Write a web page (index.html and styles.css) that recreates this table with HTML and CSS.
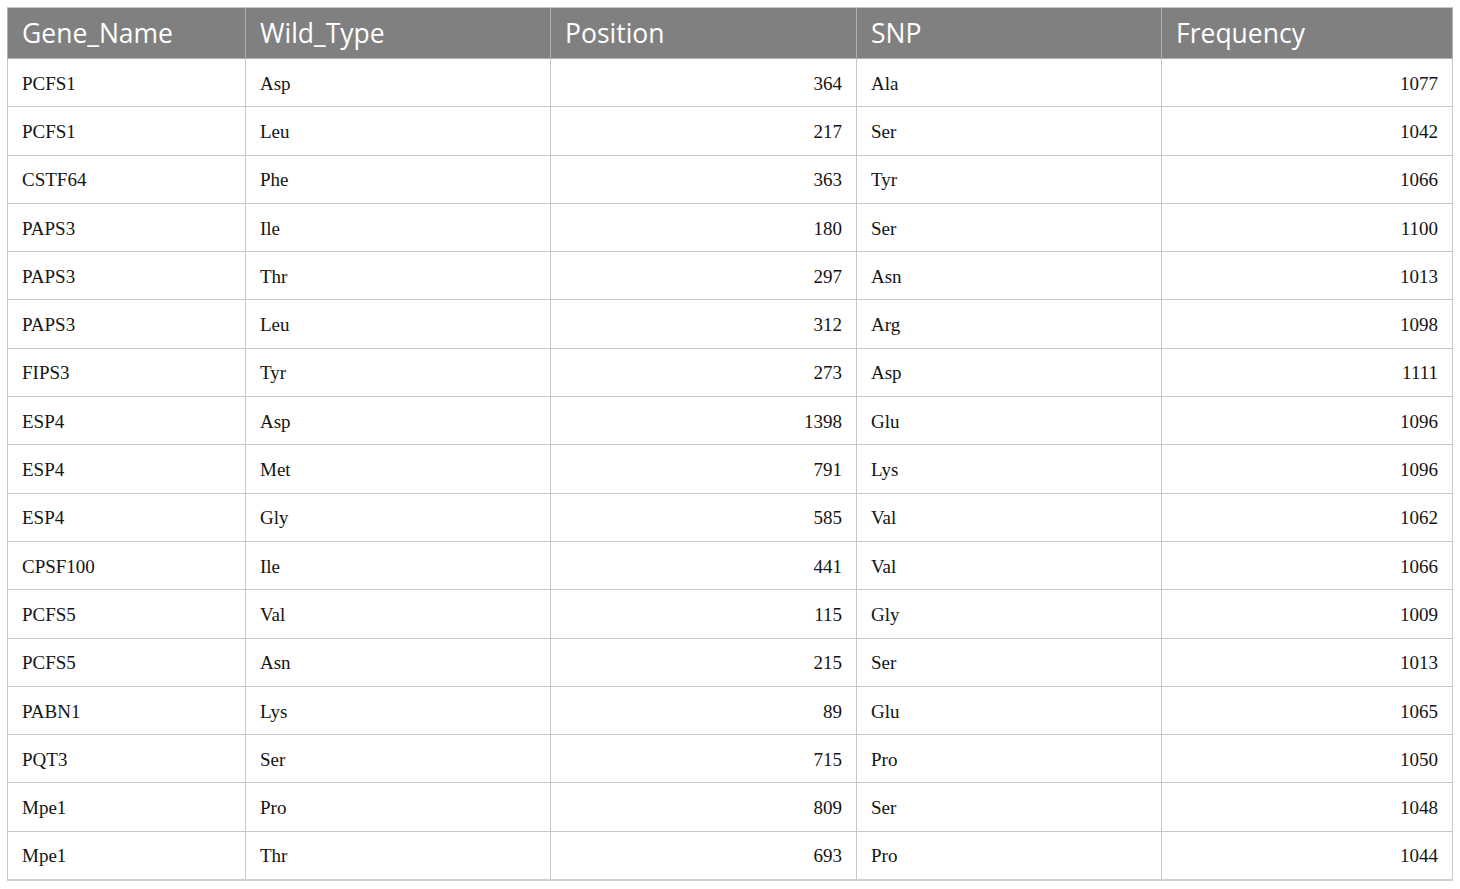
FILE: index.html
```html
<!DOCTYPE html>
<html>
<head>
<meta charset="utf-8">
<link rel="stylesheet" href="styles.css">
</head>
<body>
<table class="data">
  <colgroup>
    <col class="c1"><col class="c2"><col class="c3"><col class="c4"><col class="c5">
  </colgroup>
  <thead>
    <tr><th>Gene_Name</th><th>Wild_Type</th><th>Position</th><th>SNP</th><th>Frequency</th></tr>
  </thead>
  <tbody>
    <tr><td>PCFS1</td><td>Asp</td><td class="num">364</td><td>Ala</td><td class="num">1077</td></tr>
    <tr><td>PCFS1</td><td>Leu</td><td class="num">217</td><td>Ser</td><td class="num">1042</td></tr>
    <tr><td>CSTF64</td><td>Phe</td><td class="num">363</td><td>Tyr</td><td class="num">1066</td></tr>
    <tr><td>PAPS3</td><td>Ile</td><td class="num">180</td><td>Ser</td><td class="num">1100</td></tr>
    <tr><td>PAPS3</td><td>Thr</td><td class="num">297</td><td>Asn</td><td class="num">1013</td></tr>
    <tr><td>PAPS3</td><td>Leu</td><td class="num">312</td><td>Arg</td><td class="num">1098</td></tr>
    <tr><td>FIPS3</td><td>Tyr</td><td class="num">273</td><td>Asp</td><td class="num">1111</td></tr>
    <tr><td>ESP4</td><td>Asp</td><td class="num">1398</td><td>Glu</td><td class="num">1096</td></tr>
    <tr><td>ESP4</td><td>Met</td><td class="num">791</td><td>Lys</td><td class="num">1096</td></tr>
    <tr><td>ESP4</td><td>Gly</td><td class="num">585</td><td>Val</td><td class="num">1062</td></tr>
    <tr><td>CPSF100</td><td>Ile</td><td class="num">441</td><td>Val</td><td class="num">1066</td></tr>
    <tr><td>PCFS5</td><td>Val</td><td class="num">115</td><td>Gly</td><td class="num">1009</td></tr>
    <tr><td>PCFS5</td><td>Asn</td><td class="num">215</td><td>Ser</td><td class="num">1013</td></tr>
    <tr><td>PABN1</td><td>Lys</td><td class="num">89</td><td>Glu</td><td class="num">1065</td></tr>
    <tr><td>PQT3</td><td>Ser</td><td class="num">715</td><td>Pro</td><td class="num">1050</td></tr>
    <tr><td>Mpe1</td><td>Pro</td><td class="num">809</td><td>Ser</td><td class="num">1048</td></tr>
    <tr><td>Mpe1</td><td>Thr</td><td class="num">693</td><td>Pro</td><td class="num">1044</td></tr>
  </tbody>
</table>
</body>
</html>
```
FILE: styles.css
```css
html, body {
  margin: 0;
  padding: 0;
  background: #ffffff;
}
body {
  padding: 7px 0 0 7px;
}
.data {
  border-collapse: collapse;
  table-layout: fixed;
  width: 1445px;
  border: 1px solid #c8c8c8;
  border-bottom: 2px solid #d0d0d0;
}
.c1 { width: 238px; }
.c2 { width: 305px; }
.c3 { width: 306px; }
.c4 { width: 305px; }
.c5 { width: 291px; }
.data th {
  background: #808080;
  color: #ffffff;
  font-family: "Open Sans", "Noto Sans", sans-serif;
  font-weight: normal;
  font-size: 26.5px;
  text-align: left;
  height: 51px;
  padding: 0 14px;
  box-sizing: border-box;
  border: 1px solid #b0b0b0;
  border-top-color: #c8c8c8;
  vertical-align: middle;
}
.data td {
  font-family: "Liberation Serif", "Times New Roman", serif;
  font-size: 19px;
  color: #141414;
  height: 48.3px;
  padding: 2px 14px 0 14px;
  box-sizing: border-box;
  border: 1px solid #c8c8c8;
  vertical-align: middle;
}
.data td.num {
  text-align: right;
}
```
